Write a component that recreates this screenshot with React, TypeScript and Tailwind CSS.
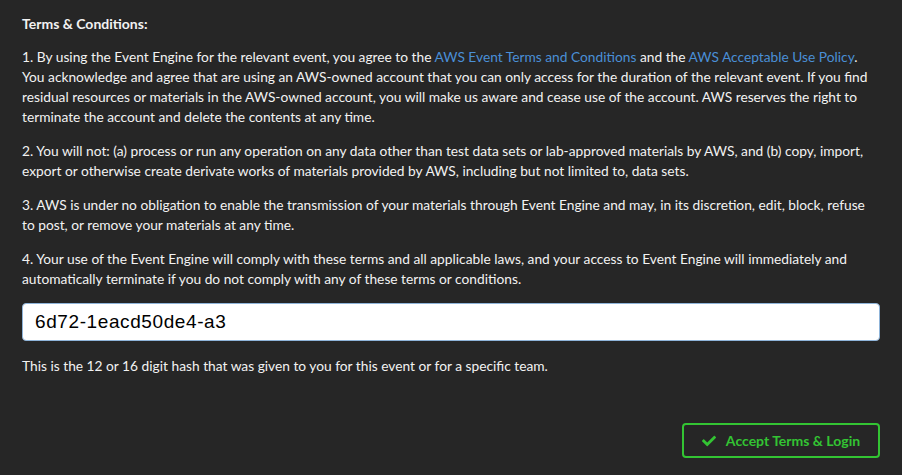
import React from "react";
import { FaCheck } from "react-icons/fa";

export default function App() {
  return (
    <div className="min-h-[475px] w-full bg-[#262626] text-[#f2f2f2] px-[22px] pt-[14px] pb-4" style={{ fontFamily: "Lato, 'Open Sans', sans-serif" }}>
      <div className="text-[13.75px] leading-[20px]">
        <p className="font-bold mb-[13px] text-[14px]">Terms &amp; Conditions:</p>
        <p className="mb-[14px]">
          1. By using the Event Engine for the relevant event, you agree to the{" "}
          <a className="text-[#4a8fd6]">AWS Event Terms and Conditions</a> and the{" "}
          <a className="text-[#4a8fd6]">AWS Acceptable Use Policy</a>. You acknowledge and agree that are using an AWS-owned account that you can only access for the duration of the relevant event. If you find residual resources or materials in the AWS-owned account, you will make us aware and cease use of the account. AWS reserves the right to terminate the account and delete the contents at any time.
        </p>
        <p className="mb-[14px]">
          2. You will not: (a) process or run any operation on any data other than test data sets or lab-approved materials by AWS, and (b) copy, import, export or otherwise create derivate works of materials provided by AWS, including but not limited to, data sets.
        </p>
        <p className="mb-[14px]">
          3. AWS is under no obligation to enable the transmission of your materials through Event Engine and may, in its discretion, edit, block, refuse to post, or remove your materials at any time.
        </p>
        <p className="mb-[14px]">
          4. Your use of the Event Engine will comply with these terms and all applicable laws, and your access to Event Engine will immediately and automatically terminate if you do not comply with any of these terms or conditions.
        </p>
      </div>
      <input
        readOnly
        value="6d72-1eacd50de4-a3"
        className="block w-full h-[38px] rounded-[4px] border border-[#8fb4d9] bg-white px-[12px] text-[19px] tracking-[0.6px] text-black outline-none"
        style={{ fontFamily: "'Liberation Sans', Arial, sans-serif" }}
      />
      <p className="mt-[15px] text-[13.75px] leading-[20px]">
        This is the 12 or 16 digit hash that was given to you for this event or for a specific team.
      </p>
      <div className="flex justify-end mt-[47px]">
        <button className="flex items-center justify-center gap-[10px] w-[198px] h-[35px] rounded-[4px] border-2 border-[#33c433] text-[#33c433] font-bold text-[14px]">
          <FaCheck className="w-[14px] h-[14px]" />
          <span>Accept Terms &amp; Login</span>
        </button>
      </div>
    </div>
  );
}
